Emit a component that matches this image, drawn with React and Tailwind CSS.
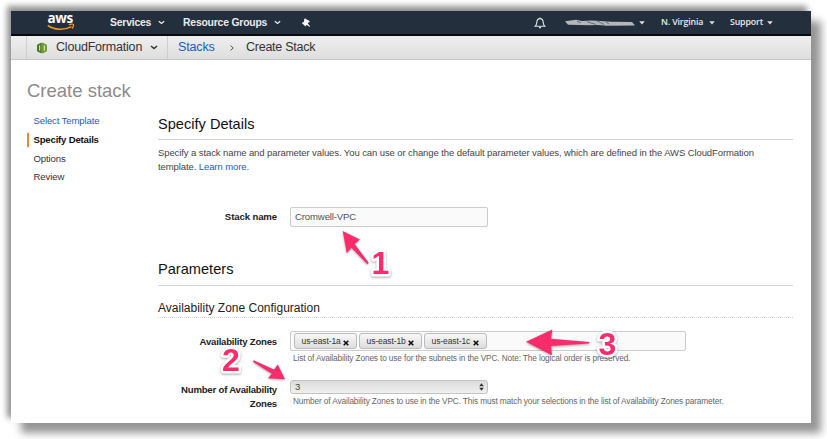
import React from "react";

function Caret({ className = "" }) {
  return (
    <svg viewBox="0 0 8 5" className={`shrink-0 ${className}`} fill="none" stroke="currentColor" strokeWidth="1.5">
      <path d="M1 1l3 2.6L7 1" />
    </svg>
  );
}

function Triangle() {
  return (
    <svg viewBox="0 0 6 4" className="h-[4px] w-[6px] shrink-0" fill="#dcdfe3">
      <path d="M0.2 0.3h5.6L3 3.6z" />
    </svg>
  );
}

function AwsLogo() {
  return (
    <div className="relative h-[23px] w-[28px] shrink-0 text-white">
      <span className="absolute left-[0.5px] top-[0.5px] text-[13.5px] leading-[13px] font-bold font-['Open_Sans',sans-serif] tracking-[-0.4px]">aws</span>
      <svg viewBox="0 0 28 8" className="absolute left-0 top-[12px] h-[8px] w-[28px]" fill="none" stroke="#f7981f">
        <path d="M0.8 2.4C7 7.2 17.5 7.4 24.4 3.6" strokeWidth="1.6" />
        <path d="M21.8 1.8c2-.9 4.4-.8 4.7-.3.3.6-.3 2.8-1.6 4" strokeWidth="1.2" />
      </svg>
    </div>
  );
}

function TopBar() {
  return (
    <div className="flex h-[25px] shrink-0 items-center border-b-2 border-[#07090c] bg-[#242f3e] text-[#e9ebee]">
      <div className="w-[99px] pl-[36px]"><AwsLogo /></div>
      <div className="flex w-[73px] items-center text-[10.4px] font-bold">
        <span className="w-[48px] tracking-[-0.2px]">Services</span>
        <Caret className="h-[5px] w-[7px]" />
      </div>
      <div className="flex w-[118px] items-center text-[10.4px] font-bold">
        <span className="w-[91px] tracking-[-0.2px]">Resource Groups</span>
        <Caret className="h-[5px] w-[7px]" />
      </div>
      <svg viewBox="0 0 10 10" className="h-[10px] w-[10px]" fill="#f2f4f6">
        <path d="M4.1 0.3L5.2 1.2 7.3 2.2 8.8 3.3 8.1 4.5 7.2 4.5 6.8 5.6 8.9 8 8.8 9 5.8 7 4.8 7.8 4.1 8.6 3.1 7 1.1 5.6 0.9 4.8 2.8 4 3.2 2.7 3 1.6z" />
      </svg>
      <svg viewBox="0 0 12 12" className="ml-[223px] h-[12px] w-[12px]" fill="none" stroke="#dfe3e7" strokeWidth="1.1">
        <path d="M1.2 9.3c1.6-1.3 1.4-2.5 1.6-4.2C3 3 4.3 1.6 6 1.6S9 3 9.2 5.1c.2 1.7 0 2.9 1.6 4.2z" />
        <path d="M6 .5v1M5 10.6h2" />
      </svg>
      <svg viewBox="0 0 72 8" className="ml-[18px] h-[8px] w-[72px] blur-[0.7px]">
        <path d="M1 2.2L12 .8l6 1.2 10-.4 8 .5 11 .7 21 .2 3 3.4-28 .4-9-.8-8 .3-22-.5z" fill="#b3b6ba" />
        <path d="M13 2.4l4 1.4M23 2.8l9 2.6M33 2l7 3.4M42 3l3 2" stroke="#5a636e" strokeWidth=".9" />
      </svg>
      <div className="ml-[3px] flex w-[22px] items-center"><Triangle /></div>
      <div className="flex w-[69px] items-center text-[8.8px] font-semibold font-['Open_Sans',sans-serif]">
        <span className="w-[48px] tracking-[-0.15px]">N. Virginia</span>
        <Triangle />
      </div>
      <div className="flex items-center text-[8.8px] font-semibold font-['Open_Sans',sans-serif]">
        <span className="w-[37px] tracking-[-0.15px]">Support</span>
        <Triangle />
      </div>
    </div>
  );
}

function Breadcrumb() {
  return (
    <div className="flex h-[24px] shrink-0 items-stretch border-b border-[#c6c6c6] bg-linear-to-b from-[#efefef] to-[#dedede] text-[12.5px] text-[#333]">
      <div className="w-[16px] border-r border-[#cfcfcf]" />
      <div className="flex w-[141px] items-center border-r border-[#cfcfcf] pl-[9px]">
        <svg viewBox="0 0 12 12" className="h-[12px] w-[12px] shrink-0">
          <path d="M1 2.7L5.5.4v11.2L1 9.3z" fill="#4b7a20" />
          <path d="M11 2.7L6.5.4v11.2L11 9.3z" fill="#6d9f35" />
          <path d="M5.2 1h1.6v10H5.2z" fill="#5c8d2a" />
          <path d="M3.7 3.4v5.2M8.3 3.4v5.2" stroke="#e4eed8" strokeWidth="1" />
        </svg>
        <span className="ml-[8px] w-[94px] tracking-[-0.2px]">CloudFormation</span>
        <Caret className="h-[5px] w-[8px]" />
      </div>
      <div className="flex items-center pl-[10px]">
        <span className="w-[52px] tracking-[-0.15px] text-[#1460bd]">Stacks</span>
        <svg viewBox="0 0 4 6" className="h-[6px] w-[4px]" fill="none" stroke="#555"><path d="M.6.6L3.2 3 .6 5.4" /></svg>
        <span className="ml-[12px] tracking-[-0.25px]">Create Stack</span>
      </div>
    </div>
  );
}

const steps = ["Select Template", "Specify Details", "Options", "Review"];
const zones = ["us-east-1a", "us-east-1b", "us-east-1c"];

function Steps() {
  return (
    <nav className="mt-[4px] flex w-[131px] shrink-0 flex-col text-[9.6px] leading-[14px]">
      {steps.map((s, i) => (
        <div key={s} className="flex h-[18.7px] items-center">
          <span
            className={
              i === 0
                ? "border-l-2 border-transparent pl-[4.5px] tracking-[-0.15px] text-[#1f5bb5]"
                : i === 1
                ? "border-l-2 border-[#f58536] pl-[4.5px] font-bold text-[#111] tracking-[-0.2px]"
                : "border-l-2 border-transparent pl-[4.5px] text-[#333] tracking-[-0.12px]"
            }
          >
            {s}
          </span>
        </div>
      ))}
    </nav>
  );
}

function Details() {
  return (
    <main className="w-[635px] shrink-0 text-[#333]">
      <h2 className="flex h-[32px] items-center border-b border-[#cfd2d2] text-[14.6px] text-[#111]">
        <span className="mt-[3px]">Specify Details</span>
      </h2>
      <p className="mt-[6px] h-[61px] text-[9.5px] leading-[14px] tracking-[-0.095px] text-[#444]">
        <span className="block whitespace-nowrap">
          Specify a stack name and parameter values. You can use or change the default parameter values, which are defined in the AWS CloudFormation
        </span>
        template. <a className="text-[#1f5bb5]">Learn more.</a>
      </p>
      <div className="flex h-[20px] items-center">
        <label className="w-[132px] pr-[13px] text-right text-[9.6px] tracking-[-0.12px] font-bold text-[#222]">Stack name</label>
        <div className="flex h-[20px] w-[198px] items-center rounded-[2px] border border-[#ccc] bg-[#fafafa] pl-[4px] text-[9.6px] tracking-[-0.15px] text-[#555]">Cromwell-VPC</div>
      </div>
      <h2 className="mt-[26px] flex h-[33px] items-center border-b border-[#d2d5d5] text-[14.6px] text-[#111]">
        <span className="mt-[2px]">Parameters</span>
      </h2>
      <h3 className="mt-[14px] flex h-[18px] items-center border-b border-dotted border-[#d0d0d0] pb-[2px] text-[12px] text-[#222]">
        Availability Zone Configuration
      </h3>
      <div className="mt-[13px] flex h-[49px]">
        <label className="w-[132px] pr-[13px] pt-[4px] text-right text-[9.6px] leading-[14px] tracking-[-0.21px] font-bold text-[#222]">Availability Zones</label>
        <div>
          <div className="flex h-[20px] w-[396px] items-center gap-[2px] rounded-[2px] border border-[#ccc] bg-[#fafafa] pl-[3px]">
            {zones.map((z) => (
              <div key={z} className="flex h-[16px] w-[63px] items-center rounded-[3px] border border-[#bbb] bg-linear-to-b from-[#f8f8f8] to-[#dddddd] pl-[6.5px] text-[8.5px] text-[#333]">
                <span className="w-[41.5px] tracking-[-0.1px]">{z}</span>
                <svg viewBox="0 0 6 6" className="mt-[3px] h-[6px] w-[6px]" stroke="#111" strokeWidth="1.6"><path d="M.7.7l4.6 4.6M5.3.7L.7 5.3" /></svg>
              </div>
            ))}
          </div>
          <div className="pl-[3px] text-[8.3px] leading-[14px] tracking-[-0.135px] whitespace-nowrap text-[#666]">
            List of Availability Zones to use for the subnets in the VPC. Note: The logical order is preserved.
          </div>
        </div>
      </div>
      <div className="flex">
        <label className="w-[132px] pr-[13px] pt-[3px] text-right text-[9.6px] leading-[14px] tracking-[-0.21px] font-bold text-[#222]">
          Number of Availability<br />Zones
        </label>
        <div>
          <div className="flex h-[14px] w-[198px] items-center justify-between rounded-[3px] border border-[#c2c2c2] bg-linear-to-b from-[#dcdcdc] to-[#f0f0f0] pl-[4px] pr-[3px] text-[9.6px] text-[#444]">
            <span>3</span>
            <svg viewBox="0 0 5 8" className="h-[8px] w-[5px]" fill="#333"><path d="M.2 3.3L2.5.2l2.3 3.1zM.2 4.7h4.6L2.5 7.8z" /></svg>
          </div>
          <div className="pl-[3px] text-[8.3px] leading-[14px] tracking-[-0.135px] whitespace-nowrap text-[#666]">
            Number of Availability Zones to use in the VPC. This must match your selections in the list of Availability Zones parameter.
          </div>
        </div>
      </div>
    </main>
  );
}

function Annotations() {
  return (
    <svg viewBox="0 0 827 439" className="pointer-events-none absolute left-0 top-0 h-[439px] w-[827px] font-['Liberation_Sans',sans-serif] drop-shadow-[0_1px_1px_rgba(0,0,0,0.35)]">
      <g fill="#fc2b6c">
        <path d="M342.7 231l17.2 8.5-5.2 4.6 14 18.6-1.3 1.5-16-16.4-4.6 5.5z" />
        <path d="M285 379.3l-17-1 3.8-4.6-18.9-12 .8-1.4 20.3 9.2 3.8-5z" />
        <path d="M526 341.7l26.3-12.3-1.2 9.3 38.2 3.2v1.5l-38.2 2.6.8 9.3z" />
      </g>
      <g fill="#fc2b6c" stroke="#fff" strokeWidth="5" strokeLinejoin="round" paintOrder="stroke" fontSize="32" fontWeight="bold">
        <text x="371.5" y="274">1</text>
        <text x="222" y="371">2</text>
        <text x="598.5" y="355">3</text>
      </g>
    </svg>
  );
}

export default function App() {
  return (
    <div className="relative h-[439px] w-[827px] overflow-hidden bg-white p-[11px] font-['Liberation_Sans',Arial,sans-serif]">
      <div className="flex h-[412px] w-[800px] flex-col bg-white shadow-[-4px_-5px_6px_0px_#929292,10px_10px_8px_0px_#969696]">
        <TopBar />
        <Breadcrumb />
        <h1 className="ml-[16px] mt-[19px] h-[23px] text-[18.5px] leading-[23px] text-[#8c8c8c]">Create stack</h1>
        <div className="ml-[16px] mt-[6px] flex">
          <Steps />
          <Details />
        </div>
      </div>
      <Annotations />
    </div>
  );
}
